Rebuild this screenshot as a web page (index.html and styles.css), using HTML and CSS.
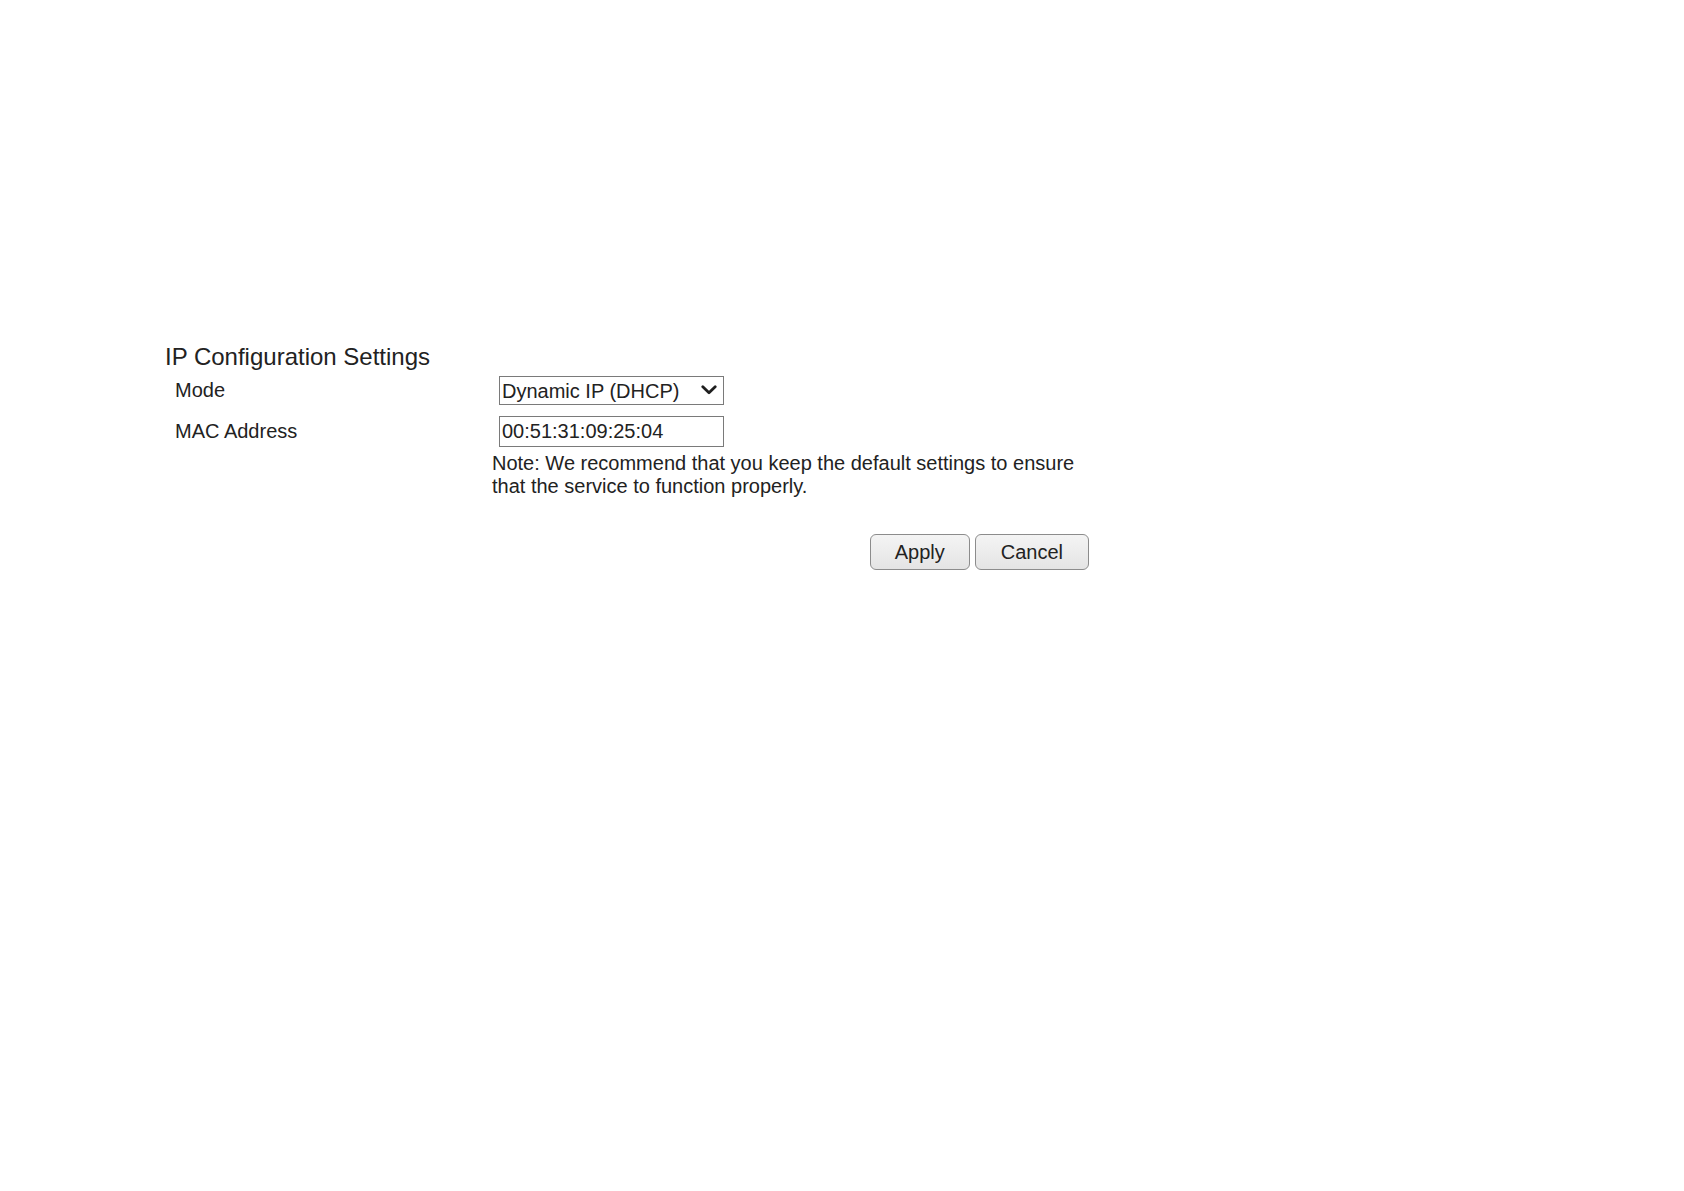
FILE: index.html
```html
<!DOCTYPE html>
<html lang="en">
<head>
  <meta charset="UTF-8">
  <title>IP Configuration Settings</title>
  <link rel="stylesheet" href="styles.css">
</head>
<body>
  <div class="page">
    <h2 class="section-title">IP Configuration Settings</h2>

    <form class="settings" onsubmit="return false;">
      <label class="field-label" for="mode">Mode</label>
      <div class="field">
        <span class="select-wrap">
          <select id="mode" class="field-select">
            <option selected>Dynamic IP (DHCP)</option>
            <option>Static IP</option>
            <option>PPPoE</option>
          </select>
          <svg class="select-arrow" width="16" height="10" viewBox="0 0 16 10" aria-hidden="true">
            <path d="M1.8 1.8 L8 7.8 L14.2 1.8" fill="none" stroke="#1f1f1f" stroke-width="2.8" stroke-linecap="round" stroke-linejoin="round"/>
          </svg>
        </span>
      </div>

      <label class="field-label last" for="mac">MAC Address</label>
      <div class="field last">
        <input type="text" id="mac" class="field-input" value="00:51:31:09:25:04">
      </div>

      <div></div>
      <p class="note">Note: We recommend that you keep the default settings to ensure that the service to function properly.</p>

      <div></div>
      <div class="actions">
        <button type="submit" class="btn">Apply</button>
        <button type="button" class="btn btn-wide">Cancel</button>
      </div>
    </form>
  </div>
</body>
</html>
```

FILE: styles.css
```css
body {
  margin: 0;
  background: #fff;
  color: #222;
  font-family: 'Liberation Sans', Arial, sans-serif;
  font-size: 20px;
}

.page {
  padding: 343px 0 0 165px;
}

.section-title {
  margin: 0;
  font-size: 24px;
  font-weight: normal;
  line-height: normal;
  color: #222;
}

.settings {
  display: grid;
  grid-template-columns: 327px 597px;
  align-items: center;
  margin-top: 5px;
}

.field-label {
  padding-left: 10px;
  margin-bottom: 11px;
}

.field {
  padding-left: 7px;
  margin-bottom: 11px;
}

.field-label.last,
.field.last {
  margin-bottom: 5px;
}

.select-wrap {
  position: relative;
  display: inline-block;
}

.field-select,
.field-input {
  box-sizing: border-box;
  width: 225px;
  margin: 0;
  border: 1px solid #7a7a7a;
  border-radius: 0;
  background: #fff;
  color: #222;
  font-family: inherit;
  font-size: 20px;
  outline: none;
}

.field-select {
  display: block;
  height: 29px;
  padding: 0 0 0 2px;
  -webkit-appearance: none;
  appearance: none;
}

.select-arrow {
  position: absolute;
  right: 7px;
  top: 9px;
}

.field-input {
  display: block;
  height: 31px;
  padding: 0 2px;
}

.note {
  margin: 0;
  line-height: normal;
}

.actions {
  display: flex;
  justify-content: flex-end;
  gap: 5px;
  margin-top: 36px;
}

.btn {
  height: 36px;
  padding: 0 24px;
  border: 1px solid #8c8c8c;
  border-radius: 6px;
  background: linear-gradient(to bottom, #f4f4f4, #e4e4e4);
  color: #222;
  font-family: inherit;
  font-size: 20px;
  cursor: pointer;
}

.btn-wide {
  padding: 0 25px;
}

.btn:hover {
  background: linear-gradient(to bottom, #fafafa, #e9e9e9);
}
```
